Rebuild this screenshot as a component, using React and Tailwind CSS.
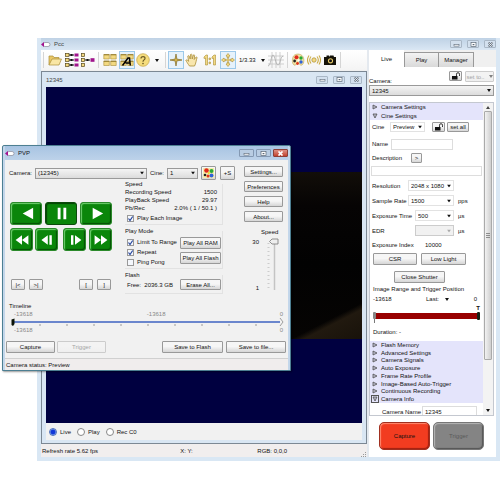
import React from "react";

const BTN =
  "flex items-center justify-center whitespace-nowrap rounded-[1px] border border-[#999] bg-linear-to-b from-[#f6f6f6] from-45% to-[#d6d6d6] text-[#111] disabled:border-[#ccc] disabled:from-[#f3f3f3] disabled:to-[#efefef] disabled:text-[#a5a5a5]";

function Btn({ className = "", children, ...rest }) {
  return (
    <button type="button" className={`${BTN} ${className}`} {...rest}>
      {children}
    </button>
  );
}

function Select({ label, value, className = "", look = "border-[#e2e2e2] bg-white", disabled }) {
  return (
    <div className={`relative ${className}`}>
      <select
        aria-label={label}
        disabled={disabled}
        className={`block h-full w-full appearance-none border pl-[2px] text-[#111] outline-none ${look}`}
      >
        <option>{value}</option>
      </select>
      <svg viewBox="0 0 4 3" className="pointer-events-none absolute top-1/2 right-[3px] h-[3px] w-[4px] -translate-y-1/2">
        <path d="M0 0h4L2 3z" fill={disabled ? "#aaa" : "#111"} />
      </svg>
    </div>
  );
}

const SHINY = "border-[#999] bg-linear-to-b from-[#f4f4f4] to-[#dcdcdc]";

function Logo() {
  return (
    <svg viewBox="0 0 10 7" className="h-[7px] w-[10px]">
      <rect x="2" y="1.5" width="7" height="4" rx="2" fill="#fff" stroke="#8a8a9a" strokeWidth=".7" />
      <path d="M0 3.5 3 1v5z" fill="#a3128f" />
    </svg>
  );
}

function WindowButtons({ red, small }) {
  const base = `flex items-center justify-center rounded-[1px] border ${small ? "h-[8px] w-[12px]" : "h-[8px] w-[15px]"}`;
  const plain = red ? "border-[#8499b3] bg-[#b9cde3]" : "border-[#a9b7c6] bg-[#d3e0ee]";
  return (
    <div className={`flex ${small ? "gap-[5px]" : "gap-[2px]"}`}>
      <button type="button" aria-label="Minimize" className={`${base} ${plain}`}>
        <svg viewBox="0 0 7 5" className="h-[5px] w-[7px]"><rect x="1" y="2.5" width="5" height="1.6" fill="#fff" stroke="#5b6775" strokeWidth=".6" /></svg>
      </button>
      <button type="button" aria-label="Maximize" className={`${base} ${plain}`}>
        <svg viewBox="0 0 7 5" className="h-[5px] w-[7px]"><rect x="1" y=".5" width="5" height="4" fill="#fff" stroke="#5b6775" strokeWidth=".7" /><rect x="2.6" y="2" width="1.8" height="1.2" fill="#5b6775" /></svg>
      </button>
      <button type="button" aria-label="Close" className={`${base} ${red ? "border-[#8c4038] bg-linear-to-b from-[#dc9186] to-[#c2402c]" : plain}`}>
        <svg viewBox="0 0 7 5" className="h-[5px] w-[7px]">
          <path d="M1.5.5l4 4M5.5.5l-4 4" stroke={red ? "#fff" : "#5b6775"} strokeWidth="1.7" />
          {!red && <path d="M1.5.5l4 4M5.5.5l-4 4" stroke="#fff" strokeWidth=".7" />}
        </svg>
      </button>
    </div>
  );
}

function Lock() {
  return (
    <svg viewBox="0 0 10 8" className="h-[8px] w-[10px]">
      <rect x="1" y="4" width="5.5" height="3.5" fill="#111" />
      <path d="M5.5 4V2.2a1.5 1.5 0 0 1 3 0V4" fill="none" stroke="#222" strokeWidth=".9" />
    </svg>
  );
}

function Palette() {
  return (
    <svg viewBox="0 0 14 14" className="h-[14px] w-[14px]">
      <path d="M2 4C3 1 8 0 11 2.5c2.5 2 2.5 8 0 9.500-2 1-2-1.500-4-1.500S4.500 13 3 12C1 10.500 1 7 2 4z" fill="#f2e3a4" stroke="#b9a458" strokeWidth=".6" />
      <circle cx="5.500" cy="4.200" r="2" fill="#e02a1c" />
      <circle cx="10" cy="5" r="1.700" fill="#27a836" />
      <circle cx="10" cy="9" r="1.700" fill="#2f62d8" />
      <circle cx="3.600" cy="8" r="1.400" fill="#222" />
      <circle cx="6.500" cy="10.500" r="1.400" fill="#e0361c" />
      <circle cx="7.500" cy="7.300" r="1.100" fill="#fff" />
    </svg>
  );
}

function ColorBlobs() {
  return (
    <svg viewBox="0 0 13 12" className="h-[12px] w-[13px]">
      <rect x="1" y="1" width="11" height="10" fill="#f6edaa" />
      <circle cx="4.500" cy="3.500" r="2.300" fill="#e02a1c" />
      <circle cx="9.500" cy="4" r="2" fill="#27a836" />
      <circle cx="9.500" cy="8.500" r="2" fill="#2f62d8" />
      <circle cx="3" cy="8" r="1.300" fill="#222" />
      <circle cx="6" cy="9" r="1.500" fill="#e0361c" />
      <circle cx="6.800" cy="6" r="1" fill="#f4d51f" />
    </svg>
  );
}

function Tool({ label, className = "", active, children }) {
  return (
    <button
      type="button"
      aria-label={label}
      className={`flex h-[18px] shrink-0 items-center justify-center ${active ? "border border-[#9cc9ea] bg-[#e6f2fb]" : ""} ${className}`}
    >
      {children}
    </button>
  );
}

const Sep = ({ className = "" }) => <span className={`h-[16px] w-px shrink-0 bg-[#d5d5d5] ${className}`} />;
const Caret = () => (
  <svg viewBox="0 0 4 3" className="h-[3px] w-[4px]"><path d="M0 0h4L2 3z" fill="#111" /></svg>
);
const GOLD = "#f3d981";
const EDGE = "#a98d36";

function Panes({ children }) {
  return (
    <svg viewBox="0 0 14 14" className="h-[14px] w-[14px]">
      <g fill={GOLD} stroke={EDGE} strokeWidth=".6">
        <path d="M.8 1.500h5.500v4.500H.8zM7.700 1.500h5.500v4.500H7.700zM.8 8h5.500v4.500H.8zM7.700 8h5.500v4.500H7.700z" />
      </g>
      <path d="M.8 1.800h5.500M7.700 1.800h5.500M.8 8.300h5.500M7.700 8.300h5.500" stroke="#8c7428" strokeWidth=".9" />
      {children}
    </svg>
  );
}

function Toolbar() {
  return (
    <div role="toolbar" aria-label="Main" className="flex h-[20px] items-center overflow-hidden bg-linear-to-b from-white to-[#f4f4f4] pl-[2px]">
      <Sep />
      <Tool label="Open" className="ml-[4px] w-[14px]">
        <svg viewBox="0 0 14 14" className="h-[14px] w-[14px]">
          <path d="M1 12V3h4l1 1.500h5V6" fill="#e9c766" stroke={EDGE} strokeWidth=".7" />
          <path d="M1 12 4 6h9.500L11 12z" fill="#f9e6a4" stroke={EDGE} strokeWidth=".7" />
        </svg>
      </Tool>
      <Tool label="Connect all cameras" className="ml-[3px] w-[14px]">
        <svg viewBox="0 0 14 14" className="h-[14px] w-[14px]">
          {[0, 5, 10].map((y) => (
            <g key={y}>
              <rect x=".5" y={y + 0.5} width="3.500" height="3" fill={GOLD} stroke="#57491c" strokeWidth=".7" />
              <path d={`M4 ${y + 2}h5`} stroke="#111" strokeWidth="1" />
              <rect x="5.500" y={y + 1} width="2" height="2" fill="#111" />
              <rect x="9.500" y={y + 0.5} width="4" height="3" fill="#a0148c" />
            </g>
          ))}
        </svg>
      </Tool>
      <Tool label="Connect camera" className="ml-[2px] w-[14px]">
        <svg viewBox="0 0 14 14" className="h-[14px] w-[14px]">
          {[0, 5, 10].map((y) => (
            <rect key={y} x=".5" y={y + 0.5} width="3" height="3" fill={GOLD} stroke="#57491c" strokeWidth=".7" />
          ))}
          <path d="M4 7h5" stroke="#111" />
          <rect x="5.500" y="6" width="2" height="2" fill="#111" />
          <rect x="9.500" y="5.200" width="4" height="3.600" fill="#a0148c" />
        </svg>
      </Tool>
      <Sep className="ml-[3px]" />
      <Tool label="Tile windows" className="ml-[4px] w-[14px]"><Panes /></Tool>
      <Tool label="Arrange automatically" active className="ml-[2px] w-[16px]">
        <Panes>
          <path d="M2.500 12.500 8 5h1.500l.8 7.500M5.500 10H10" fill="none" stroke="#000" strokeWidth="1.500" />
        </Panes>
      </Tool>
      <Tool label="Help" className="ml-[1px] w-[14px]">
        <svg viewBox="0 0 14 14" className="h-[14px] w-[14px]">
          <circle cx="7" cy="7" r="6.300" fill="#f5dc7c" stroke="#c3a445" strokeWidth=".7" />
          <path d="M5 5.500C5 2.800 9.300 3 9 5.500 8.800 7 7 6.800 7 8.700" fill="none" stroke="#6b5a24" strokeWidth="1.200" />
          <circle cx="7" cy="10.600" r=".8" fill="#6b5a24" />
        </svg>
      </Tool>
      <Tool label="More help" className="ml-[2px] w-[10px]"><Caret /></Tool>
      <Sep className="ml-[3px]" />
      <Tool label="Crosshair" active className="ml-[2px] w-[16px]">
        <svg viewBox="0 0 14 14" className="h-[14px] w-[14px]">
          <path d="M7 1l.9 5.100L13 7l-5.100.9L7 13l-.9-5.100L1 7l5.100-.9z" fill="#d8b850" stroke="#806a25" strokeWidth=".7" />
        </svg>
      </Tool>
      <Tool label="Pan" className="ml-[1px] w-[14px]">
        <svg viewBox="0 0 14 14" className="h-[14px] w-[14px]">
          <path d="M4.500 13C3 11 1.500 8.500.8 7.300c.7-.8 1.600-.3 2.800 1L2.800 3c.6-.7 1.300-.3 1.500.3L5.200 6 5.500 1.500c.6-.6 1.200-.4 1.400.2L7.200 6l1.200-4c.7-.5 1.200-.1 1.200.6L9.200 6.500l2-2.500c.7-.2 1 .3.8.9C11.200 7 11 10.500 9.500 13z" fill="#f8e6ae" stroke="#a98d36" strokeWidth=".8" />
        </svg>
      </Tool>
      <Tool label="Actual size" className="ml-[4px] w-[14px]">
        <svg viewBox="0 0 14 14" className="h-[14px] w-[14px]">
          <path d="M1 4l2-2h1.500v10H2.500V5L1 5.500zM9 4l2-2h1.500v10h-2V5L9 5.500zM6 5h1.500v1.700H6zM6 9h1.500v1.700H6z" fill={GOLD} stroke={EDGE} strokeWidth=".6" />
        </svg>
      </Tool>
      <Tool label="Fit to window" active className="ml-[3px] w-[16px]">
        <svg viewBox="0 0 14 14" className="h-[14px] w-[14px]">
          <path d="M7 .5l2 2.500H8v1.500H6V3H5zM7 13.500l2-2.500H8V9.500H6V11H5zM.5 7 3 5v1h1.500v2H3v1zM13.500 7 11 5v1H9.500v2H11v1z" fill={GOLD} stroke={EDGE} strokeWidth=".6" />
          <circle cx="7" cy="7" r="1.400" fill={GOLD} stroke={EDGE} strokeWidth=".6" />
        </svg>
      </Tool>
      <span className="ml-[3px] w-[20px] shrink-0">1/3.33</span>
      <Tool label="Zoom levels" className="w-[8px]"><Caret /></Tool>
      <Tool label="Histogram" className="ml-[1px] w-[16px]">
        <svg viewBox="0 0 16 16" className="h-[16px] w-[16px]">
          <path d="M0 4h16M0 8h16M0 12h16M4 0v16M8 0v16M12 0v16" stroke="#bdbdbd" strokeWidth=".7" />
          <path d="M0 14C3 14 3 3 5 3S7.500 13 10 13s2-8 5-9" fill="none" stroke="#ababab" strokeWidth=".8" />
        </svg>
      </Tool>
      <Sep className="ml-[3px]" />
      <Tool label="Color" className="ml-[3px] w-[14px]"><Palette /></Tool>
      <Tool label="Signals" className="ml-[2px] w-[14px]">
        <svg viewBox="0 0 14 14" className="h-[14px] w-[14px]">
          <circle cx="7" cy="7" r="2.200" fill={GOLD} stroke={EDGE} strokeWidth=".7" />
          <path d="M4 3.500C2.500 5.500 2.500 8.500 4 10.500M10 3.500c1.500 2 1.500 5 0 7M2 2.500c-2 3-2 6 0 9M12 2.500c2 3 2 6 0 9" fill="none" stroke="#ccac48" strokeWidth="1.100" />
        </svg>
      </Tool>
      <Tool label="Snapshot" className="ml-[2px] w-[14px]">
        <svg viewBox="0 0 14 14" className="h-[14px] w-[14px]">
          <path d="M1 4h2.500V2.500H6V4l1-1.500h3.500L11 4h2v8H1z" fill="#151208" />
          <circle cx="7.500" cy="7.800" r="2.600" fill="#e6c968" />
          <circle cx="7.500" cy="7.800" r="1.500" fill="#111" />
        </svg>
      </Tool>
      <Sep className="ml-[3px]" />
    </div>
  );
}

function ViewerWindow() {
  return (
    <section className="mt-px flex min-h-0 flex-1 flex-col border border-[#7c8894] bg-[#d9e6f3] px-[4px] pb-[3px]">
      <div className="flex h-[15px] shrink-0 items-center justify-between text-[#444]">
        <span>12345</span>
        <WindowButtons small />
      </div>
      <div className="flex min-h-0 flex-1 items-center bg-[#000040]">
        <div className="h-[167px] w-full bg-[linear-gradient(153deg,transparent_89%,#21190f_91%,#18120a_100%),linear-gradient(to_bottom,#120e09,#060404_20%,#020202_55%,#060403)]" />
      </div>
      <div className="flex h-[17px] shrink-0 items-center gap-[6px] bg-[#f1f1f1] pl-[3px]">
        {["Live", "Play", "Rec C0"].map((name, i) => (
          <label key={name} className="flex items-center gap-[3px]">
            <input
              type="radio"
              name="view"
              defaultChecked={i === 0}
              className="h-[8px] w-[8px] appearance-none rounded-full border border-[#888] bg-white checked:border-[#4b6db8] checked:bg-[radial-gradient(circle,#1238d8_0_2px,#8fb0f4_3px)]"
            />
            {name}
          </label>
        ))}
      </div>
    </section>
  );
}

function FoldRow({ label, open, boxed }) {
  return (
    <button type="button" aria-expanded={!!open} className="flex w-full items-center gap-[2px] pl-px text-left">
      <span className={`flex h-[8px] w-[8px] shrink-0 items-center justify-center ${boxed ? "border border-[#555]" : ""}`}>
        <svg viewBox="0 0 6 6" className="h-[6px] w-[6px]">
          <path d={open ? "M1 1h4L3 5z" : "M1 1v4L5 3z"} fill="#b9b9c9" stroke="#444" strokeWidth=".7" />
        </svg>
      </span>
      {label}
    </button>
  );
}

const FIELDS = [
  { label: "Resolution", value: "2048 x 1080", unit: "" },
  { label: "Sample Rate", value: "1500", unit: "pps" },
  { label: "Exposure Time", value: "500", unit: "µs", narrow: true },
  { label: "EDR", value: "", unit: "µs", narrow: true, disabled: true },
];

const SECTIONS = [
  "Flash Memory",
  "Advanced Settings",
  "Camera Signals",
  "Auto Exposure",
  "Frame Rate Profile",
  "Image-Based Auto-Trigger",
  "Continuous Recording",
];

function SettingsList() {
  return (
    <div className="flex min-h-0 flex-1 overflow-hidden border border-[#c4c8d0] bg-white">
      <div className="min-w-0 flex-1">
        <div className="grid h-[17px] grid-rows-2 bg-[#e4e4fb]">
          <FoldRow label="Camera Settings" />
          <FoldRow label="Cine Settings" open />
        </div>
        <div className="flex h-[14px] items-center pl-[2px]">
          <span className="w-[18px]">Cine</span>
          <Select label="Cine" value="Preview" className="h-[10px] w-[35px]" />
          <Btn aria-label="Lock settings" className="ml-[7px] h-[10px] w-[13px]"><Lock /></Btn>
          <Btn className="ml-[2px] h-[10px] w-[22px]">set all</Btn>
        </div>
        <div className="mt-[4px] flex h-[12px] items-center pl-[2px]">
          <label htmlFor="cine-name" className="w-[19px]">Name</label>
          <input id="cine-name" className="h-[11px] w-[62px] border border-[#ddd] px-[2px]" />
        </div>
        <div className="mt-[2px] flex h-[12px] items-center pl-[2px]">
          <label htmlFor="cine-desc" className="w-[39px]">Description</label>
          <Btn aria-label="Expand description" className="h-[10px] w-[11px]">&gt;</Btn>
        </div>
        <input id="cine-desc" className="mt-[2px] ml-px block h-[10px] w-[111px] border border-[#ddd] px-[2px]" />
        <div className="mt-[2px]">
          {FIELDS.map((f) => (
            <div key={f.label} className="flex h-[15px] items-center pl-[2px]">
              <span className={`whitespace-nowrap ${f.narrow ? "w-[43px]" : "w-[36px]"}`}>{f.label}</span>
              <Select
                label={f.label}
                value={f.value}
                disabled={f.disabled}
                look={f.disabled ? "border-[#ccc] bg-[#f1f1f1]" : "border-[#e2e2e2] bg-white"}
                className={`h-[11px] ${f.narrow ? "w-[39px]" : "w-[46px]"}`}
              />
              <span className="ml-[4px]">{f.unit}</span>
            </div>
          ))}
        </div>
        <div className="flex h-[13px] items-center pl-[2px]">
          <span className="w-[53px]">Exposure Index</span>
          <span>10000</span>
        </div>
        <div className="mt-[2px] flex gap-[4px] pl-[3px]">
          <Btn className="h-[12px] w-[44px]">CSR</Btn>
          <Btn className="h-[12px] w-[45px]">Low Light</Btn>
        </div>
        <Btn className="mt-[6px] ml-[24px] h-[12px] w-[51px]">Close Shutter</Btn>
        <fieldset className="mt-[2px] h-[56px] px-[3px]">
          <legend className="h-[8px]">Image Range and Trigger Position</legend>
          <div className="flex h-[12px] items-center">
            <span className="w-[53px]">-13618</span>
            <span>Last:</span>
            <span className="ml-[6px]"><Caret /></span>
            <span className="flex-1 pr-[3px] text-right">0</span>
          </div>
          <div className="text-right leading-[7px] font-bold">T</div>
          <svg viewBox="0 0 108 11" preserveAspectRatio="none" className="h-[11px] w-full">
            <rect x="1" y="1" width="106" height="6" fill="#980000" />
            <rect x="0" y="0" width="3" height="7" rx="1" fill="#888" />
            <path d="M1.500 7v4" stroke="#777" />
            <rect x="105" y="0" width="3" height="8" rx="1" fill="#142014" />
          </svg>
          <div className="mt-[5px]">Duration: -</div>
        </fieldset>
        <div className="grid h-[62px] grid-rows-8 bg-[#e4e4fb]">
          {SECTIONS.map((s) => <FoldRow key={s} label={s} />)}
          <FoldRow label="Camera Info" open boxed />
        </div>
        <div className="mt-[3px] flex h-[11px] items-center pl-[12px]">
          <label htmlFor="cam-name" className="w-[40px] whitespace-nowrap">Camera Name</label>
          <input id="cam-name" defaultValue="12345" className="h-[11px] w-[55px] border border-[#ddd] px-[2px]" />
        </div>
      </div>
      <div className="flex w-[10px] flex-col items-center justify-between bg-[#f3f3f3] py-[3px]">
        <svg viewBox="0 0 4 3" className="h-[3px] w-[4px]"><path d="M0 3h4L2 0z" fill="#444" /></svg>
        <div className="mt-[2px] mb-auto flex h-[249px] w-[8px] items-center justify-center rounded-[1px] border border-[#aaa] bg-linear-to-r from-[#f2f2f2] to-[#cfcfcf]">
          <svg viewBox="0 0 4 5" className="h-[5px] w-[4px]"><path d="M0 .5h4M0 2.500h4M0 4.500h4" stroke="#777" strokeWidth=".8" /></svg>
        </div>
        <Caret />
      </div>
    </div>
  );
}

function SidePanel() {
  return (
    <aside className="flex w-[127px] shrink-0 flex-col bg-[#f0f0f0]">
      <div role="tablist" className="flex h-[17px] items-end">
        <button type="button" role="tab" aria-selected="true" className="h-full w-[35px] bg-white">Live</button>
        <button type="button" role="tab" aria-selected="false" className="h-[15px] w-[35px] border border-b-0 border-[#999] bg-linear-to-b from-[#f3f3f3] to-[#d9d9d9]">Play</button>
        <button type="button" role="tab" aria-selected="false" className="h-[15px] w-[35px] border border-b-0 border-l-0 border-[#999] bg-linear-to-b from-[#f3f3f3] to-[#d9d9d9]">Manager</button>
      </div>
      <div className="flex min-h-0 flex-1 flex-col bg-white pr-[2px]">
        <div className="flex h-[18px] pt-[4px]">
          <label htmlFor="camera" className="flex-1 self-end">Camera:</label>
          <Btn aria-label="Lock camera" className="h-[10px] w-[13px]"><Lock /></Btn>
          <Btn disabled className="ml-[3px] h-[11px] w-[29px] gap-[4px]">set to.. <span className="opacity-50"><Caret /></span></Btn>
        </div>
        <div className="relative h-[11px]">
          <select id="camera" className={`block h-full w-full appearance-none border pl-[2px] ${SHINY}`}><option>12345</option></select>
          <span className="pointer-events-none absolute top-[4px] right-[3px]"><Caret /></span>
        </div>
        <div className="mt-[6px] flex min-h-0 flex-1 flex-col"><SettingsList /></div>
        <div className="flex justify-center gap-[3px] pt-[6px] pb-[7px]">
          <button type="button" className="h-[28px] w-[51px] rounded-[5px] border border-[#a03020] bg-[#f23c20] shadow-[inset_1px_1px_1px_#ff8a70,inset_-1px_-1px_1px_#a02010]">Capture</button>
          <button type="button" disabled className="h-[28px] w-[51px] rounded-[5px] border border-[#777] bg-[#848484] text-[#5a5a5a] shadow-[inset_1px_1px_1px_#b5b5b5,inset_-1px_-1px_1px_#555]">Trigger</button>
        </div>
      </div>
    </aside>
  );
}

const SHAPES = {
  back: "M17 4v12L6 10z",
  pause: "M6 4h3v12H6zM12 4h3v12h-3z",
  play: "M6 4v12l11-6z",
  rewind: "M10 4v12L2 10zM18 4v12l-8-6z",
  stepBack: "M11 4v12L3 10zM13 4h3v12h-3z",
  step: "M5 4h3v12H5zM10 4v12l8-6z",
  forward: "M2 4v12l8-6zM10 4v12l8-6z",
};

function Green({ label, shape, big, pressed }) {
  return (
    <button
      type="button"
      aria-label={label}
      className={`flex h-[23px] items-center justify-center rounded-[3px] border bg-[#0a860a] ${big ? "w-[32px]" : "w-[23px]"} ${
        pressed
          ? "border-[#0b4a0b] shadow-[inset_1px_1px_1px_#044404]"
          : "border-[#2b8a2b] shadow-[inset_1px_1px_1px_#6fd06f,inset_-1px_-1px_1px_#055005]"
      }`}
    >
      <svg viewBox="0 0 20 20" className={big ? "h-[19px] w-[19px]" : "h-[16px] w-[16px]"}><path d={SHAPES[shape]} fill="#fff" /></svg>
    </button>
  );
}

function Check({ label, checked }) {
  return (
    <label className="flex h-[10px] items-center gap-[3px] whitespace-nowrap">
      <span className="relative h-[7px] w-[7px]">
        <input type="checkbox" defaultChecked={checked} className="peer block h-[7px] w-[7px] appearance-none border border-[#999] bg-[#f4f7fc]" />
        <svg viewBox="0 0 7 7" className="pointer-events-none absolute inset-0 hidden h-[7px] w-[7px] peer-checked:block">
          <path d="M1.500 3.500 3 5.500l2.700-4" fill="none" stroke="#26459c" strokeWidth="1.200" />
        </svg>
      </span>
      {label}
    </label>
  );
}

const GROUP = "border-r border-b border-[#e2e2e2]";

function Transport() {
  return (
    <div className="flex w-[102px] flex-col">
      <div className="flex justify-between">
        <Green big label="Play backward" shape="back" />
        <Green big pressed label="Pause" shape="pause" />
        <Green big label="Play forward" shape="play" />
      </div>
      <div className="mt-[3px] flex justify-between">
        <div className="flex gap-[2px]"><Green label="Rewind" shape="rewind" /><Green label="Step back" shape="stepBack" /></div>
        <div className="flex gap-[3px]"><Green label="Step forward" shape="step" /><Green label="Fast forward" shape="forward" /></div>
      </div>
      <div className="mt-[28px] flex justify-between px-px">
        <div className="flex gap-[4px]"><Btn aria-label="To start" className="h-[11px] w-[14px]">|&lt;</Btn><Btn aria-label="To end" className="h-[11px] w-[14px]">&gt;|</Btn></div>
        <div className="flex gap-[4px]"><Btn aria-label="Mark in" className="h-[11px] w-[14px]">[</Btn><Btn aria-label="Mark out" className="h-[11px] w-[14px]">]</Btn></div>
      </div>
    </div>
  );
}

function PlayGroups() {
  const rows = [["Recording Speed", "1500"], ["PlayBack Speed", "29.97"], ["Pb/Rec", "2.0% ( 1 / 50.1 )"]];
  return (
    <div className="flex w-[98px] flex-col">
      <fieldset className={`h-[45px] pr-[5px] ${GROUP}`}>
        <legend className="h-[8px]">Speed</legend>
        {rows.map(([k, v]) => (
          <div key={k} className="flex h-[8px] justify-between whitespace-nowrap"><span>{k}</span><span>{v}</span></div>
        ))}
        <div className="mt-px pl-[2px]"><Check label="Play Each Image" checked /></div>
      </fieldset>
      <fieldset className={`mt-[2px] h-[42px] ${GROUP}`}>
        <legend className="h-[8px]">Play Mode</legend>
        <div className="mt-[2px] flex justify-between pr-px pl-[2px]">
          <div>
            <Check label="Limit To Range" checked />
            <Check label="Repeat" checked />
            <Check label="Ping Pong" />
          </div>
          <div className="flex flex-col gap-[3px]">
            <Btn className="h-[12px] w-[41px]">Play All RAM</Btn>
            <Btn className="h-[12px] w-[41px]">Play All Flash</Btn>
          </div>
        </div>
      </fieldset>
      <fieldset className={`mt-[2px] h-[23px] ${GROUP}`}>
        <legend className="h-[8px]">Flash</legend>
        <div className="flex items-center justify-between pr-px pl-[2px]">
          <span className="whitespace-nowrap">Free:&nbsp; 2036.3 GB</span>
          <Btn className="h-[11px] w-[41px]">Erase All...</Btn>
        </div>
      </fieldset>
    </div>
  );
}

function PvpWindow() {
  return (
    <section className="absolute top-[145px] left-[2px] w-[289px] rounded-t-[2px] border border-[#4d7f92] bg-[#c3d6ea] px-[2px] shadow-[1px_1px_2px_#0006]">
      <div className="flex h-[14px] items-center justify-between bg-linear-to-b from-[#a8c4e2] to-[#bdd2e9]">
        <div className="flex items-center gap-[3px]"><Logo /><span>PVP</span></div>
        <WindowButtons red />
      </div>
      <div className="bg-[#f1f1f1]">
        <div className="flex justify-between pt-[6px] pr-[5px] pl-[4px]">
          <div>
            <div className="flex h-[14px] items-center">
              <span className="w-[26px]">Camera:</span>
              <Select label="Camera" value="(12345)" look={SHINY} className="h-[11px] w-[112px]" />
              <span className="ml-[3px] w-[17px]">Cine:</span>
              <Select label="Cine" value="1" look={SHINY} className="h-[11px] w-[31px]" />
              <Btn aria-label="Color" className="ml-[3px] h-[14px] w-[15px]"><ColorBlobs /></Btn>
              <Btn className="ml-[4px] h-[14px] w-[15px]">+S</Btn>
            </div>
            <div className="flex">
              <div className="pt-[22px] pl-px"><Transport /></div>
              <div className="ml-[13px]"><PlayGroups /></div>
            </div>
          </div>
          <div className="flex w-[39px] flex-col gap-[4px]">
            {["Settings...", "Preferences", "Help", "About..."].map((t) => <Btn key={t} className="h-[11px] w-full">{t}</Btn>)}
            <div className="mt-[2px]">
              <div className="pl-[17px]">Speed</div>
              <div className="flex h-[56px] justify-between pt-[2px] pr-[4px] pl-[7px]">
                <div className="flex w-[8px] flex-col justify-between text-right"><span>30</span><span>1</span></div>
                <div className="relative w-[14px]">
                  <svg viewBox="0 0 14 54" className="h-[54px] w-[14px]">
                    <path d="M9.500 5v47" stroke="#c4c4c4" strokeWidth="1.500" />
                    <path d="M3.500 5v47" stroke="#ccc" strokeWidth="2" strokeDasharray="1 3" />
                    <path d="M7 1h6v5H7L4.500 3.500z" fill="#eee" stroke="#777" strokeWidth=".8" />
                  </svg>
                  <input type="range" min="1" max="30" defaultValue="30" aria-label="Speed" className="absolute inset-0 h-full w-full opacity-0" />
                </div>
              </div>
            </div>
          </div>
        </div>
        <div className="px-[4px] pt-[8px]">
          <div>Timeline</div>
          <div className="flex justify-between pr-px pl-[5px] text-[#888]"><span>-13618</span><span>-13618</span><span>0</span></div>
          <svg viewBox="0 0 275 8" preserveAspectRatio="none" className="block h-[8px] w-full">
            <path d="M4 4h267" stroke="#3c62c0" strokeWidth="1.500" />
            {[31, 58, 85, 112, 139, 166, 193, 220, 247].map((x) => <path key={x} d={`M${x} 6v2`} stroke="#888" strokeWidth=".8" />)}
            <path d="M2.500 1.500 5.500.5v5.500L4 8l-1.500-1z" fill="#0c1408" />
            <path d="M271 0l3 4-3 4" fill="none" stroke="#888" strokeWidth=".8" />
          </svg>
          <div className="flex justify-between pr-px pl-[5px] text-[#888]"><span>-13618</span><span>0</span></div>
        </div>
        <div className="mt-[7px] flex px-px">
          <Btn className="h-[12px] w-[49px]">Capture</Btn>
          <Btn disabled className="ml-[2px] h-[12px] w-[49px]">Trigger</Btn>
          <Btn className="ml-auto h-[12px] w-[61px]">Save to Flash</Btn>
          <Btn className="mr-px ml-[3px] h-[12px] w-[60px]">Save to file...</Btn>
        </div>
        <div className="mt-[5px] flex h-[12px] items-center border-t border-[#d0d0d0] bg-[#f0eded] pl-px">Camera status: Preview</div>
      </div>
    </section>
  );
}

export default function App() {
  return (
    <main className="relative h-screen overflow-hidden bg-white pt-[38px] pb-[39px] pl-[37px] font-['Liberation_Sans',Arial,sans-serif] text-[6px] leading-[8px] text-[#111]">
      <section className="flex h-full flex-col bg-[#d9e7f4] px-[4px] pb-[4px]">
        <div className="flex h-[12px] shrink-0 items-center justify-between bg-linear-to-b from-[#bfd2e5] to-[#dae7f4] text-[#444]">
          <div className="flex items-center gap-[3px]"><Logo /><span>Pcc</span></div>
          <WindowButtons small />
        </div>
        <div className="flex min-h-0 flex-1">
          <div className="flex min-w-0 flex-1 flex-col bg-[#f0f0f0]">
            <Toolbar />
            <ViewerWindow />
            <div className="flex h-[13px] shrink-0 items-center bg-[#f1eeee] px-px">
              <span className="flex-4">Refresh rate 5.62 fps</span>
              <span className="flex-2">X: Y:</span>
              <span className="flex-3 pl-[8px]">RGB: 0,0,0</span>
              <svg viewBox="0 0 5 5" className="h-[5px] w-[5px] self-end">
                <path d="M4 0h1v1H4zM2 2h1v1H2zM4 2h1v1H4zM0 4h1v1H0zM2 4h1v1H2zM4 4h1v1H4z" fill="#999" />
              </svg>
            </div>
          </div>
          <div className="w-[2px] bg-[#e4e9ef]" />
          <SidePanel />
        </div>
      </section>
      <PvpWindow />
    </main>
  );
}
